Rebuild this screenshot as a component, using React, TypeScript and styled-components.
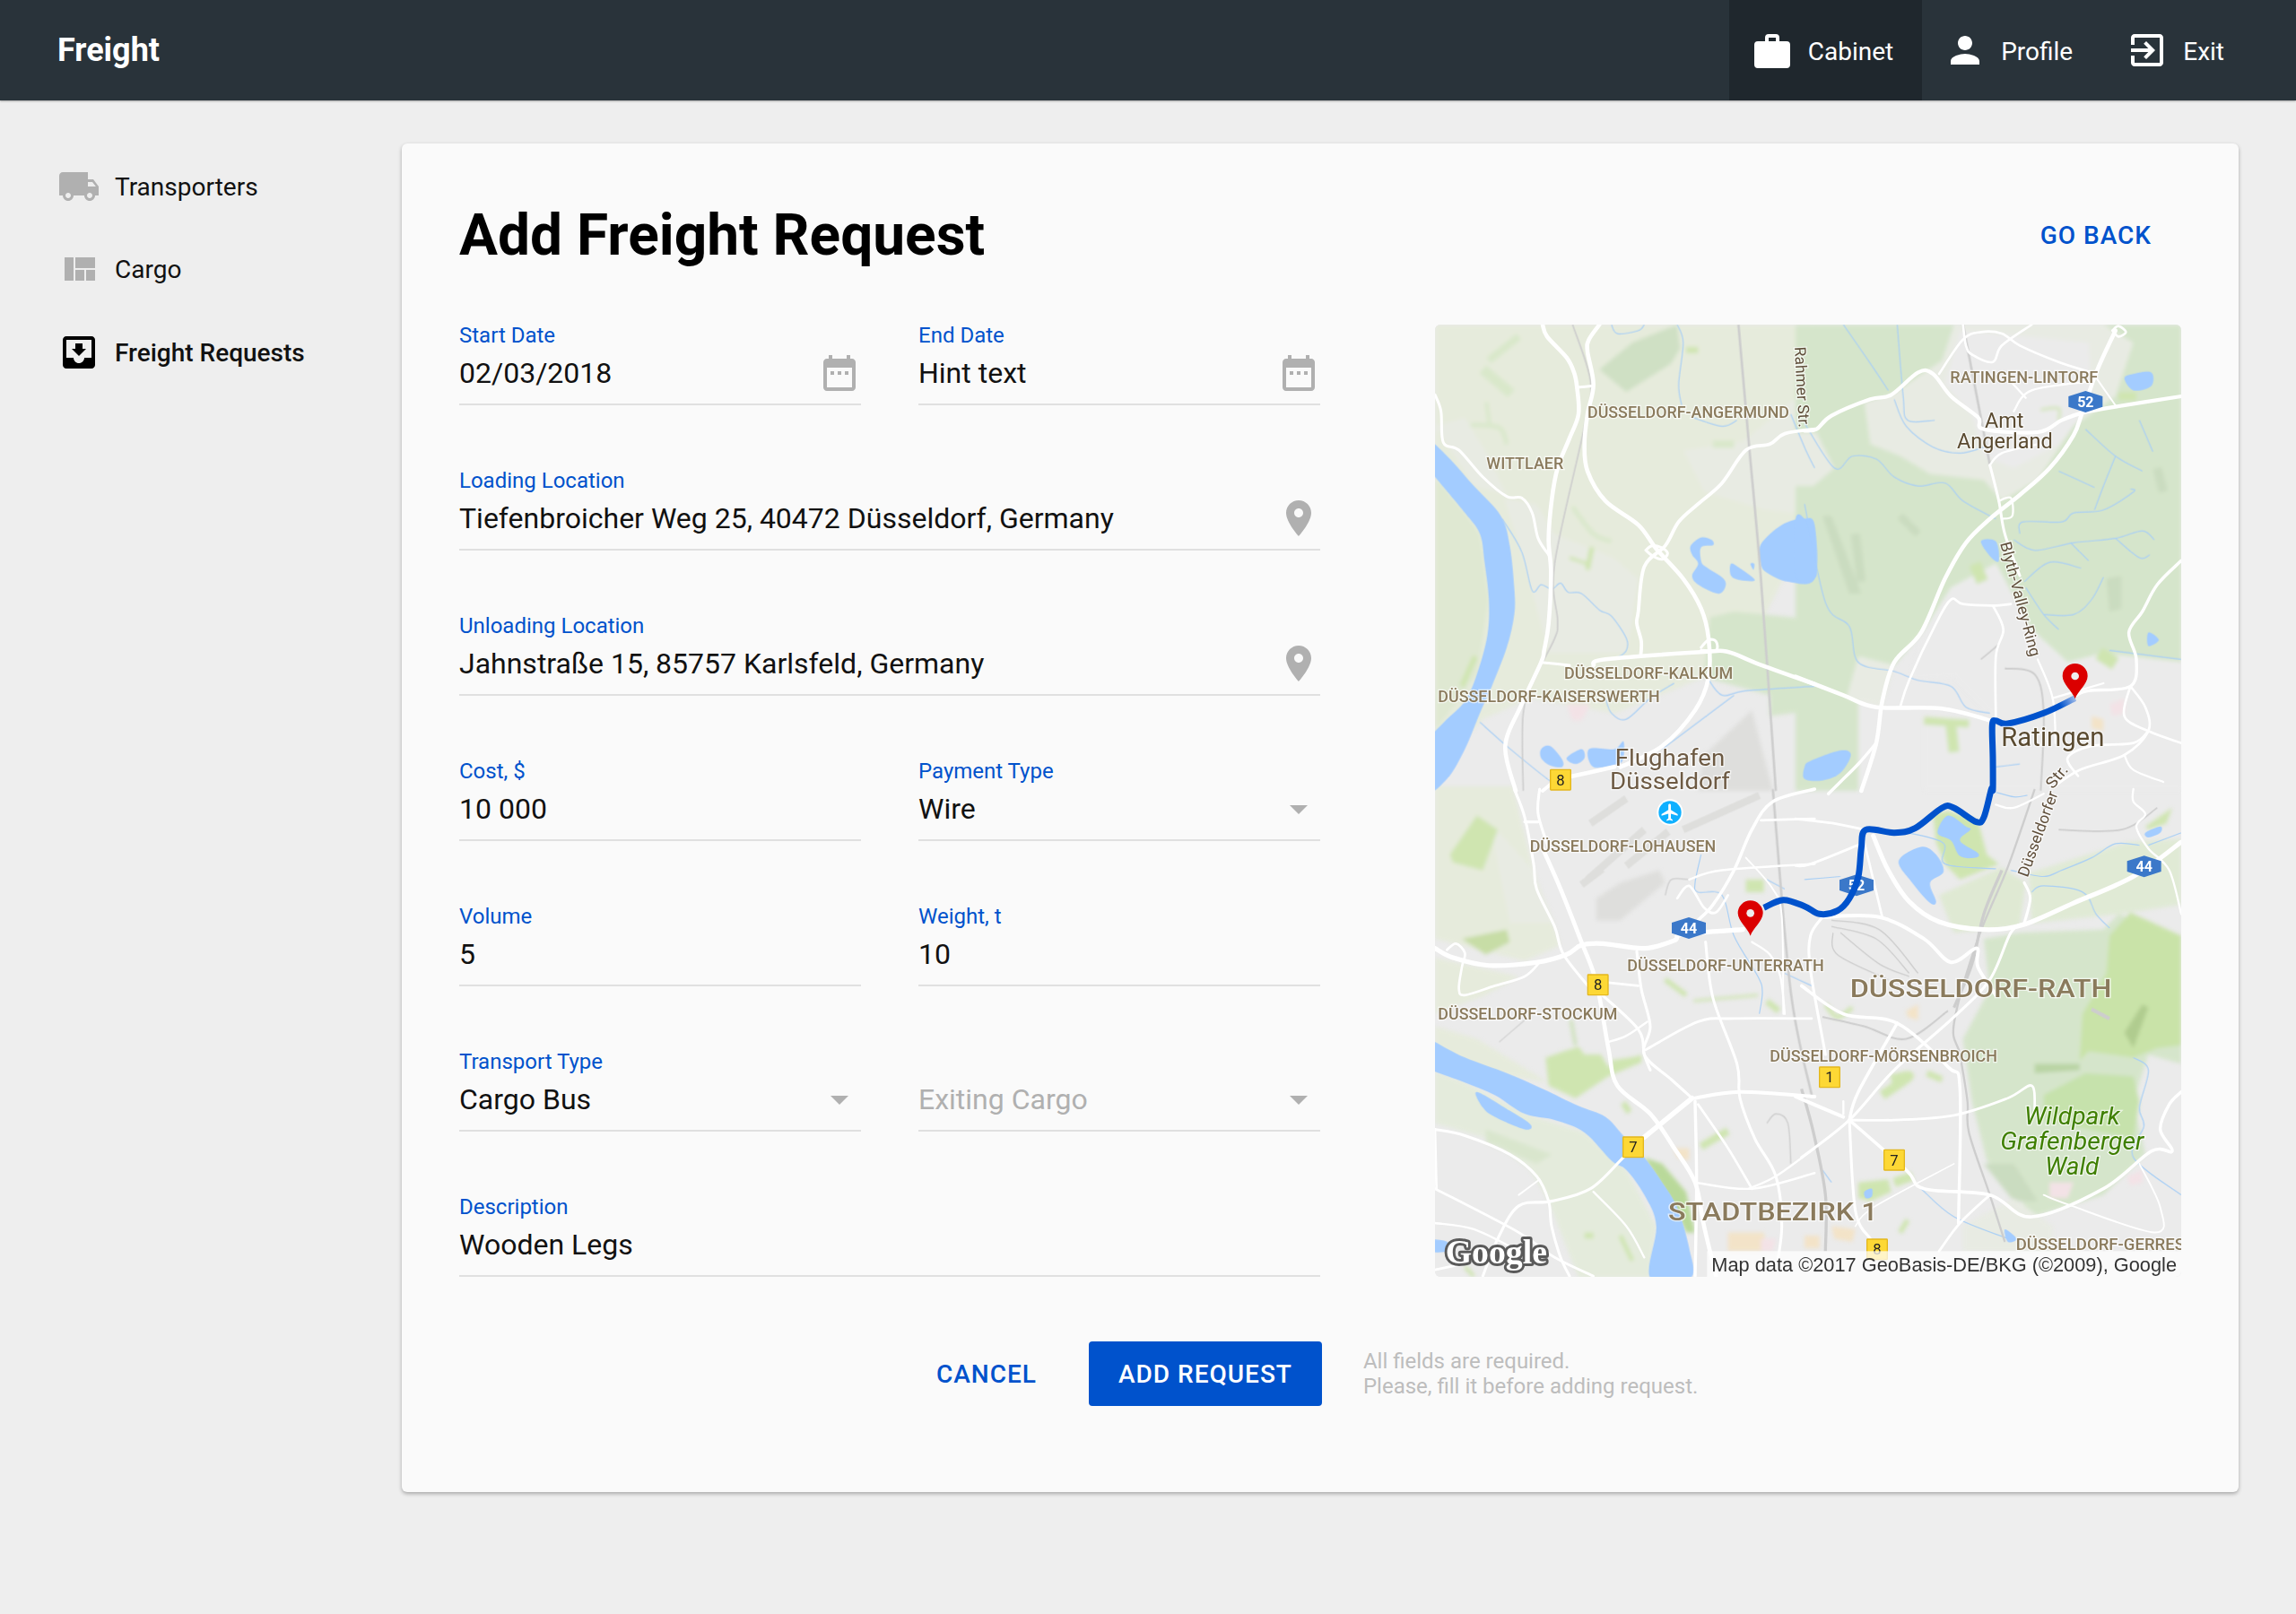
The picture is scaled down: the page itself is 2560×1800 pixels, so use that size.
import React from 'react';
import styled, { createGlobalStyle } from 'styled-components';

const BLUE = '#0052cc';
const GRAY_ICON = '#b0b0b0';

const GlobalStyle = createGlobalStyle`
  html, body {
    margin: 0;
    background: #eeeeee;
    font-family: Roboto, 'Liberation Sans', sans-serif;
  }
`;

const Page = styled.div`
  width: 2560px;
  min-height: 1800px;
  background: #eeeeee;
`;

const Header = styled.header`
  display: flex;
  align-items: stretch;
  justify-content: space-between;
  height: 112px;
  padding: 0 48px 0 64px;
  background: #29333a;
  color: #fff;
  box-shadow: 0 1px 2px rgba(0, 0, 0, 0.3);
`;

const Logo = styled.div`
  align-self: center;
  font-size: 36px;
  font-weight: 700;
`;

const TopNav = styled.nav`
  display: flex;
`;

const TopTab = styled.a<{ $active?: boolean }>`
  display: flex;
  align-items: center;
  gap: 16px;
  padding: 0 32px 0 24px;
  font-size: 28px;
  background: ${({ $active }) => ($active ? '#1f272d' : 'transparent')};
  svg {
    fill: #fff;
  }
  &:last-child {
    margin-left: 3px;
  }
`;

const TabLabel = styled.span`
  margin-top: 3px;
`;

const Shell = styled.div`
  display: flex;
  align-items: flex-start;
`;

const Sidebar = styled.aside`
  display: flex;
  flex-direction: column;
  gap: 44.5px;
  width: 448px;
  box-sizing: border-box;
  padding: 72px 0 0 64px;
  flex: none;
`;

const SideItem = styled.a<{ $active?: boolean }>`
  display: flex;
  align-items: center;
  gap: 16px;
  height: 48px;
  font-size: 28px;
  font-weight: ${({ $active }) => ($active ? 500 : 400)};
  color: #111;
  svg {
    fill: ${({ $active }) => ($active ? '#000' : GRAY_ICON)};
  }
`;

const Card = styled.main`
  width: 2048px;
  box-sizing: border-box;
  margin-top: 48px;
  padding: 0 64px 96px;
  background: #fafafa;
  border-radius: 6px;
  box-shadow: 0 2px 4px rgba(0, 0, 0, 0.3);
`;

const CardHead = styled.div`
  display: flex;
  align-items: center;
  justify-content: space-between;
  height: 200px;
  padding: 2px 33px 0 0;
`;

const Title = styled.h1`
  margin: 0;
  font-size: 64px;
  font-weight: 700;
  color: #000;
`;

const TextButton = styled.a`
  font-size: 28px;
  font-weight: 500;
  letter-spacing: 1px;
  color: ${BLUE};
  text-transform: uppercase;
`;

const Body = styled.div`
  display: flex;
  justify-content: space-between;
`;

const FormGrid = styled.div`
  display: grid;
  grid-template-columns: 448px 448px;
  column-gap: 64px;
  row-gap: 72px;
`;

const FieldBox = styled.div<{ $wide?: boolean }>`
  display: flex;
  flex-direction: column;
  height: 90px;
  box-sizing: border-box;
  border-bottom: 2px solid #e0e0e0;
  grid-column: ${({ $wide }) => ($wide ? 'span 2' : 'auto')};
`;

const FieldLabel = styled.label`
  font-size: 24px;
  line-height: 24px;
  color: ${BLUE};
`;

const FieldRow = styled.div`
  display: flex;
  align-items: center;
  justify-content: space-between;
  flex: 1;
  padding-bottom: 4px;
  svg {
    fill: ${GRAY_ICON};
    flex: none;
  }
`;

const FieldValue = styled.span<{ $muted?: boolean }>`
  font-size: 32px;
  color: ${({ $muted }) => ($muted ? GRAY_ICON : '#111')};
`;

const MapFrame = styled.div`
  width: 832px;
  height: 1062px;
  border-radius: 6px;
  overflow: hidden;
  background: #ebebeb;
  svg {
    display: block;
  }
`;

const Footer = styled.div`
  display: flex;
  align-items: center;
  margin-top: 72px;
  padding-left: 532px;
`;

const CancelButton = styled(TextButton)`
  margin-right: 58px;
`;

const PrimaryButton = styled.button`
  width: 260px;
  height: 72px;
  border: 0;
  border-radius: 4px;
  background: ${BLUE};
  color: #fff;
  font: 500 28px Roboto, sans-serif;
  letter-spacing: 1px;
  text-transform: uppercase;
`;

const Note = styled.p`
  margin: 0 0 0 46px;
  font-size: 24px;
  line-height: 28px;
  color: #bdbdbd;
`;

const MapText = styled.text<{ $tone?: string }>`
  font-family: Roboto, sans-serif;
  fill: ${({ $tone }) => $tone || '#8a7a5c'};
  stroke: rgba(255, 255, 255, 0.65);
  stroke-width: 8px;
  paint-order: stroke;
`;

const Icon = ({ d, size = 48 }: { d: string; size?: number }) => (
  <svg width={size} height={size} viewBox="0 0 24 24">
    <path d={d} fillRule="evenodd" />
  </svg>
);

const ICONS = {
  work: 'M4 7h4V5a2 2 0 0 1 2-2h4a2 2 0 0 1 2 2v2h4a2 2 0 0 1 2 2v11a2 2 0 0 1-2 2H4a2 2 0 0 1-2-2V9a2 2 0 0 1 2-2zM10 5v2h4V5z',
  person: 'M12 12c2.21 0 4-1.79 4-4s-1.79-4-4-4-4 1.79-4 4 1.79 4 4 4zm0 2c-2.67 0-8 1.34-8 4v2h16v-2c0-2.66-5.33-4-8-4z',
  exit: 'M10.09 15.59L11.5 17l5-5-5-5-1.41 1.41L12.67 11H3v2h9.67l-2.58 2.59zM19 3H5c-1.11 0-2 .9-2 2v4h2V5h14v14H5v-4H3v4c0 1.1.89 2 2 2h14c1.1 0 2-.9 2-2V5c0-1.1-.9-2-2-2z',
  truck: 'M20 8h-3V4H3c-1.1 0-2 .9-2 2v11h2c0 1.66 1.34 3 3 3s3-1.34 3-3h6c0 1.66 1.34 3 3 3s3-1.34 3-3h2v-5l-3-4zM6 18.5c-.83 0-1.5-.67-1.5-1.5s.67-1.5 1.5-1.5 1.5.67 1.5 1.5-.67 1.5-1.5 1.5zm13.5-9l1.96 2.5H17V9.5h2.5zm-1.5 9c-.83 0-1.5-.67-1.5-1.5s.67-1.5 1.5-1.5 1.5.67 1.5 1.5-.67 1.5-1.5 1.5z',
  quilt: 'M10 18h5v-6h-5v6zm-6 0h5V5H4v13zm12 0h5v-6h-5v6zM10 5v6h11V5H10z',
  inbox: 'M19 3H4.99c-1.11 0-1.98.89-1.98 2L3 19c0 1.1.88 2 1.99 2H19c1.1 0 2-.9 2-2V5c0-1.11-.9-2-2-2zm0 12h-4c0 1.66-1.35 3-3 3s-3-1.34-3-3H4.99V5H19v10zm-3-5h-2V7h-4v3H8l4 4 4-4z',
  calendar: 'M9 11H7v2h2v-2zm4 0h-2v2h2v-2zm4 0h-2v2h2v-2zm2-7h-1V2h-2v2H8V2H6v2H5c-1.11 0-1.99.9-1.99 2L3 20c0 1.1.89 2 2 2h14c1.1 0 2-.9 2-2V6c0-1.1-.9-2-2-2zm0 16H5V9h14v11z',
  place: 'M12 2C8.13 2 5 5.13 5 9c0 5.25 7 13 7 13s7-7.75 7-13c0-3.87-3.13-7-7-7zm0 9.5c-1.38 0-2.5-1.12-2.5-2.5s1.12-2.5 2.5-2.5 2.5 1.12 2.5 2.5-1.12 2.5-2.5 2.5z',
  arrow: 'M7 10l5 5 5-5z',
};

// map drawing, in 3x pixels: each quadrant keeps the coordinates of its own crop,
// the two lower crops came back squeezed vertically so they get stretched by SQUEEZE
const SQUEEZE = 1.0446;
const FOREST = '#d5e5cb';
const DARK = '#cadcc0';
const RURAL = '#e6ebdc';
const SOFT = '#e8ebe3';
const URBAN = '#ebebeb';
const PARK = '#cfe5b0';
const AIRPORT = '#dededc';
const PINK = '#f3e2e6';
const TAN = '#f3e3c8';
const WATER = '#a3ccff';

type Poly = [string, number[]];
type Line = [number, number[]];
type Quad = {
  dx: number;
  dy: number;
  land: Poly[];
  strips: [string, number, number[]][];
  lakes: number[][];
  streams: number[][];
  rails: Line[];
  roads: Line[];
};

const quads: Quad[] = [
  {
    dx: 0,
    dy: 0,
    land: [
      [RURAL, [0, 0, 1270, 0, 1270, 640, 1090, 1000, 900, 1180, 600, 1300, 320, 1250, 160, 1320, 0, 1500]],
      [SOFT, [230, 580, 340, 600, 400, 700, 600, 780, 680, 850, 660, 1000, 640, 1100, 380, 1100, 300, 800]],
      [SOFT, [0, 340, 100, 310, 180, 440, 240, 570, 130, 540]],
      [SOFT, [830, 420, 1030, 390, 1200, 250, 1270, 300, 1270, 640, 1100, 620, 900, 560]],
      [FOREST, [920, 980, 1000, 960, 1200, 980, 1270, 1020, 1270, 1290, 1120, 1310, 1120, 1240, 900, 1180]],
      ['#cfe0c4', [550, 150, 660, 60, 810, 0, 820, 80, 790, 130, 640, 225]],
      ['#dfe8d2', [0, 510, 100, 630, 150, 700, 180, 920, 140, 1170, 0, 1360]],
      [AIRPORT, [900, 1440, 1060, 1290, 1130, 1560, 880, 1560]],
      [PINK, [440, 1270, 520, 1270, 490, 1325, 460, 1325]],
    ],
    strips: [
      ['#d9e8ca', 24, [180, 120, 280, 40]],
      ['#d9e8ca', 34, [160, 150, 255, 230]],
      ['#d9e8ca', 14, [120, 335, 215, 345, 240, 400]],
      ['#d9e8ca', 12, [172, 260, 182, 330]],
      ['#d9e8ca', 14, [460, 610, 530, 700, 590, 725]],
      ['#d9e8ca', 24, [930, 400, 1000, 400]],
      [PARK, 10, [450, 780, 510, 800]],
      [PARK, 16, [525, 745, 510, 820]],
      [PARK, 18, [135, 1110, 90, 1210]],
      [PARK, 20, [840, 85, 880, 85]],
    ],
    lakes: [
      [1230, 650, 1270, 670, 1270, 850, 1180, 860, 1110, 830, 1090, 800, 1090, 735, 1160, 670],
      [855, 740, 890, 712, 925, 720, 930, 738, 890, 745, 890, 790, 905, 810, 965, 850, 970, 880, 945, 900, 880, 870, 860, 840, 880, 800, 860, 770],
      [990, 800, 1020, 815, 1070, 855, 1020, 855, 990, 840],
      [1055, 800, 1068, 800, 1065, 820],
      [355, 1420, 385, 1410, 425, 1455, 425, 1480, 385, 1475, 355, 1450],
      [440, 1450, 490, 1420, 500, 1450, 470, 1470],
      [515, 1420, 600, 1420, 630, 1395, 630, 1450, 610, 1470, 530, 1480],
      [0, 400, 60, 460, 130, 540, 220, 640, 250, 740, 265, 880, 265, 970, 240, 1080, 190, 1210, 150, 1300, 100, 1420, 40, 1520, -30, 1560, -30, 1380, 0, 1360, 40, 1320, 100, 1260, 140, 1170, 175, 1040, 180, 920, 165, 790, 150, 700, 100, 630, 0, 510, -30, 470, -30, 380],
    ],
    streams: [
      [225, 650, 290, 760, 325, 890, 355, 870, 390, 885, 420, 865, 445, 895, 490, 900, 550, 955, 590, 975, 640, 1050, 640, 1090, 610, 1115],
      [910, 1180, 960, 1240, 1040, 1225, 1270, 1210],
      [800, 1200, 720, 1250, 640, 1320, 590, 1300, 570, 1250],
      [150, 1330, 240, 1410, 350, 1500, 390, 1530],
      [1000, 1240, 800, 1390, 760, 1420],
      [590, 0, 610, 30, 680, 20, 700, 0],
      [810, 0, 830, 60, 815, 200, 825, 270],
      [860, 310, 960, 340, 1010, 320],
      [1190, 300, 1240, 420, 1270, 480],
    ],
    rails: [
      [5, [460, 0, 520, 190, 500, 340, 400, 800, 410, 990, 400, 1050, 340, 1170, 295, 1300, 295, 1560]],
      [8, [1015, 0, 1050, 400, 1090, 850, 1140, 1560]],
    ],
    roads: [
      [12, [360, 0, 375, 40, 440, 110, 465, 160, 475, 210, 480, 300, 450, 380, 410, 480, 390, 590, 380, 720, 388, 830, 380, 1000, 365, 1090, 355, 1130, 290, 1270, 235, 1410, 270, 1560]],
      [12, [550, 0, 515, 50, 510, 90, 530, 200, 510, 300, 500, 400, 510, 490, 570, 590, 680, 670, 740, 750, 830, 850, 890, 950, 915, 1050, 915, 1180, 870, 1290, 760, 1410, 620, 1480]],
      [8, [475, 210, 530, 205]],
      [8, [0, 235, 20, 290, 28, 395, 80, 420, 160, 510, 240, 575, 290, 580, 325, 630, 345, 715, 380, 770]],
      [10, [1270, 350, 1170, 365, 1120, 400, 1040, 420, 960, 530, 880, 600, 815, 660, 770, 740, 700, 810, 680, 960, 675, 1000, 690, 1060, 688, 1110]],
      [8, [355, 1130, 450, 1140]],
      [12, [530, 1140, 570, 1120, 900, 1095, 980, 1095, 1080, 1135, 1270, 1203]],
      [12, [440, 1515, 600, 1480]],
      [10, [360, 1560, 420, 1510]],
      [8, [705, 755, 725, 740, 755, 745, 778, 765, 760, 785, 730, 775, 705, 755]],
      [8, [890, 1080, 915, 1055, 940, 1060, 940, 1090, 890, 1090]],
    ],
  },
  {
    dx: 1236,
    dy: 0,
    land: [
      [FOREST, [-30, 0, 1260, 0, 1260, 1130, 1000, 1100, 880, 1130, 760, 1020, 640, 800, 490, 880, 400, 1020, 300, 1140, 180, 1110, 180, 1560, -30, 1560]],
      [SOFT, [500, 0, 1000, 0, 1100, 60, 1040, 240, 900, 340, 780, 520, 660, 590, 600, 520, 420, 500, 320, 440, 220, 400, 200, 260, 300, 230, 400, 160, 460, 120]],
      [URBAN, [520, 20, 950, 60, 960, 260, 850, 400, 700, 480, 600, 440, 560, 300, 470, 200]],
      [SOFT, [-30, 360, 40, 360, 100, 480, 30, 540, -30, 540]],
      [DARK, [60, 640, 90, 640, 190, 900, 150, 900]],
      [DARK, [1010, 850, 1060, 840, 1060, 950, 1020, 960]],
      [URBAN, [490, 880, 640, 800, 760, 1020, 880, 1130, 1000, 1100, 1260, 1130, 1260, 1560, 400, 1560, 400, 1320, 620, 1300, 500, 1180, 350, 1190, 400, 1020]],
      [SOFT, [180, 1110, 300, 1140, 260, 1280, 140, 1250]],
      [PINK, [1020, 1270, 1070, 1250, 1070, 1300, 1030, 1310]],
      [TAN, [960, 1310, 1000, 1320, 1000, 1360, 960, 1350]],
    ],
    strips: [
      [PARK, 26, [400, 1325, 550, 1335]],
      [PARK, 36, [490, 1340, 500, 1430]],
      [PARK, 40, [570, 800, 595, 860]],
      [PARK, 44, [985, 1100, 1040, 1135]],
      [PARK, 28, [1050, 240, 1110, 240]],
      [PARK, 8, [790, 285, 850, 280, 850, 320]],
      [DARK, 30, [170, 700, 190, 860]],
      [DARK, 26, [320, 640, 380, 700]],
      [DARK, 30, [1180, 480, 1200, 560]],
    ],
    lakes: [
      [590, 725, 640, 725, 650, 790, 625, 780],
      [1070, 180, 1100, 165, 1160, 160, 1160, 205, 1100, 220],
      [-30, 650, 0, 650, 15, 700, 40, 840, -30, 840],
      [1150, 1030, 1185, 1055, 1150, 1075],
      [20, 1460, 120, 1425, 155, 1440, 120, 1500, 60, 1525, 0, 1520, 0, 1480],
    ],
    streams: [
      [130, 0, 220, 130, 280, 220],
      [310, 0, 330, 240, 345, 320, 435, 320],
      [300, 250, 340, 340, 430, 410, 520, 430, 600, 410],
      [0, 330, 100, 480, 160, 440, 240, 450, 300, 510, 380, 540, 470, 530, 530, 590, 640, 650],
      [720, 700, 730, 660, 860, 660, 900, 630, 1000, 620, 1100, 560, 1090, 550],
      [700, 720, 770, 755, 900, 730, 1040, 715, 1130, 690, 1170, 720],
      [1040, 715, 1120, 780, 1155, 770],
      [890, 730, 950, 790],
      [735, 860, 820, 795, 925, 815],
      [740, 880, 800, 970, 850, 1020],
      [800, 970, 900, 970, 960, 920, 1000, 845],
      [940, 350, 1040, 440, 1130, 490],
      [1040, 440, 1000, 540, 970, 620],
      [850, 490, 970, 545],
      [1120, 320, 1165, 425],
      [0, 600, 70, 930, 150, 1010, 180, 1130, 300, 1160, 380, 1190, 490, 1210, 540, 1280, 620, 1300],
      [1020, 1090, 1260, 1120],
      [640, 1480, 720, 1470],
    ],
    rails: [
      [8, [530, 0, 580, 260, 620, 470]],
      [5, [590, 1120, 650, 1070]],
      [6, [670, 1150, 770, 1170, 800, 1300, 790, 1560]],
    ],
    roads: [
      [11, [0, 355, 40, 350, 90, 305, 220, 250, 290, 235, 380, 160, 430, 165, 490, 240, 580, 310, 600, 350, 780, 360, 860, 320, 930, 295, 1040, 275, 1260, 240]],
      [12, [1040, 20, 980, 150, 930, 290, 900, 370, 820, 480, 720, 570, 620, 650, 540, 730, 470, 850, 390, 1030, 300, 1130, 260, 1260, 240, 1400, 190, 1560]],
      [7, [450, 165, 530, 50, 590, 25, 660, 30, 720, 70, 850, 125, 960, 160]],
      [7, [530, 0, 540, 70, 560, 100, 630, 125, 660, 70, 760, 0]],
      [6, [700, 290, 760, 220, 960, 190]],
      [6, [680, 180, 740, 245]],
      [5, [970, 170, 1040, 270]],
      [8, [620, 470, 650, 590, 670, 700, 720, 840]],
      [6, [780, 1120, 830, 1250, 840, 1400]],
      [6, [620, 470, 660, 430, 780, 400]],
      [6, [650, 590, 690, 580, 695, 640, 660, 650]],
      [7, [1030, 20, 1050, 5, 1075, 25, 1050, 40, 1030, 20]],
      [7, [320, 1280, 350, 1190, 440, 1000, 490, 920, 530, 935, 630, 940, 690, 935]],
      [7, [630, 940, 665, 1020, 640, 1110, 640, 1320]],
      [12, [-30, 1178, 130, 1240, 240, 1280, 460, 1285, 640, 1330]],
      [9, [910, 1240, 950, 1225, 1090, 1210, 1110, 1120, 1085, 1030, 1130, 960, 1180, 870, 1260, 790]],
      [7, [1090, 1210, 1070, 1310, 1150, 1360, 1260, 1400]],
      [7, [1090, 1210, 1140, 1280, 1150, 1360, 1070, 1440, 920, 1490, 830, 1550]],
      [7, [1150, 1360, 1100, 1400, 960, 1410, 880, 1450, 915, 1510]],
      [6, [1070, 1440, 1100, 1490, 1200, 1530]],
      [9, [240, 1400, 180, 1470, 120, 1530, 80, 1570]],
      [6, [830, 1250, 1000, 1200]],
    ],
  },
  {
    dx: 0,
    dy: 1554,
    land: [
      [RURAL, [0, -10, 260, -10, 330, 260, 420, 500, 300, 550, 0, 480]],
      [SOFT, [180, 100, 330, 260, 400, 430, 250, 430]],
      [RURAL, [0, 540, 280, 600, 170, 660, 0, 720]],
      [RURAL, [0, 760, 140, 800, 380, 940, 0, 880]],
      [AIRPORT, [540, 350, 620, 300, 750, 260, 770, 300, 720, 340, 620, 420, 540, 420]],
      ['#e4ebdc', [0, 905, 100, 940, 300, 1040, 500, 1100, 640, 1220, 740, 1400, 720, 1565, 480, 1565, 380, 1320, 320, 1220, 180, 1120, 0, 1070]],
      ['#d9e6cd', [170, 1090, 390, 1170, 340, 1200, 170, 1130]],
      [PARK, [370, 860, 430, 840, 480, 825, 500, 850, 555, 850, 580, 890, 690, 850, 690, 875, 580, 920, 470, 990, 380, 950]],
      [PARK, [50, 210, 140, 85, 210, 130, 160, 260, 60, 235]],
      ['#c7dda6', [90, 480, 240, 450, 250, 490, 170, 530]],
      ['#b9d99a', [700, 1180, 760, 1200, 840, 1290, 870, 1420, 840, 1420, 790, 1320]],
      [TAN, [800, 1150, 850, 1150, 850, 1190, 810, 1180]],
      [TAN, [980, 1420, 1100, 1420, 1110, 1480, 980, 1480]],
      [PINK, [1090, 1440, 1140, 1440, 1130, 1480, 1090, 1480]],
      [PARK, [1040, 290, 1100, 290, 1100, 330, 1040, 330]],
    ],
    strips: [
      [PARK, 20, [630, 1005, 650, 1035]],
      [PARK, 22, [590, 880, 690, 865]],
      [PARK, 24, [890, 1145, 980, 1095]],
      [PARK, 14, [620, 1430, 660, 1510]],
      [PARK, 12, [100, 1530, 130, 1560]],
      [PARK, 18, [500, 1430, 530, 1430]],
      [PARK, 8, [865, 678, 1080, 660]],
      [PARK, 16, [770, 610, 840, 660]],
      ['#cfe2bd', 12, [455, 740, 470, 820]],
      [PARK, 20, [1110, 680, 1150, 710]],
    ],
    lakes: [
      [-30, 795, 0, 810, 100, 860, 240, 910, 360, 960, 480, 1015, 570, 1050, 630, 1110, 700, 1180, 760, 1260, 810, 1340, 850, 1470, 855, 1565, 720, 1565, 740, 1400, 700, 1300, 640, 1220, 590, 1190, 500, 1100, 400, 1060, 300, 1040, 200, 980, 100, 940, 0, 905, -30, 890],
      [140, 970, 250, 1030, 320, 1075, 300, 1090, 200, 1050, 160, 1020],
      [-20, 1445, 40, 1450, 40, 1480, -20, 1480],
    ],
    streams: [
      [890, 210, 870, 300, 880, 330, 960, 340, 1000, 470, 1080, 600, 1095, 650, 1085, 720],
      [1170, 590, 1260, 630],
      [1110, 290, 1170, 320],
    ],
    rails: [
      [8, [1130, 0, 1190, 650, 1260, 980]],
      [3, [215, 810, 300, 740]],
      [4, [1110, 1070, 1140, 1040, 1180, 1070, 1190, 1200]],
      [4, [770, 340, 790, 290, 850, 290]],
    ],
    roads: [
      [12, [360, 190, 420, 320, 490, 490, 540, 620, 580, 830, 610, 950, 720, 1040, 800, 1150, 870, 1260, 900, 1400, 940, 1560]],
      [8, [265, 0, 300, 90, 330, 240, 340, 320, 400, 440, 430, 530, 520, 640]],
      [8, [350, 0, 345, 80, 380, 190]],
      [8, [300, 105, 345, 105]],
      [13, [0, 510, 60, 540, 180, 565, 340, 555, 440, 530, 490, 500, 560, 495, 700, 510, 800, 485, 830, 465, 1030, 450]],
      [7, [40, 515, 70, 495, 100, 525, 90, 570, 80, 640, 100, 660, 200, 630, 300, 600, 350, 555]],
      [8, [675, 520, 690, 640, 720, 760, 700, 850, 790, 930, 860, 990]],
      [7, [580, 620, 680, 630]],
      [8, [560, 660, 680, 770, 700, 850, 720, 900]],
      [6, [580, 810, 640, 790, 710, 745]],
      [7, [705, 835, 880, 745, 1000, 735, 1260, 735]],
      [8, [905, 490, 930, 670, 1010, 880, 1020, 990, 1070, 1120, 1140, 1240, 1160, 1400, 1140, 1545]],
      [14, [860, 990, 700, 1115]],
      [8, [700, 1115, 630, 1180, 520, 1280, 390, 1320, 280, 1335, 210, 1440, 160, 1560]],
      [10, [870, 990, 1020, 970, 1270, 985]],
      [9, [870, 1000, 875, 1260, 870, 1560]],
      [7, [880, 1010, 980, 1150, 1060, 1280]],
      [6, [1050, 1280, 1140, 1240, 1270, 1150]],
      [6, [870, 1260, 1060, 1280, 1270, 1230]],
      [8, [0, 1090, 100, 1110, 250, 1170, 340, 1240, 380, 1320, 390, 1400, 420, 1500, 450, 1560]],
      [5, [280, 1300, 350, 1250]],
      [7, [0, 1280, 280, 1420, 400, 1500, 530, 1560]],
      [6, [0, 1390, 130, 1410, 280, 1480]],
      [6, [530, 1290, 640, 1400, 700, 1500]],
      [7, [0, 1540, 100, 1520]],
      [9, [1270, 0, 1130, 40, 1060, 130, 1000, 260, 930, 370, 880, 420]],
      [7, [1090, 100, 1270, 95]],
      [6, [850, 290, 960, 260, 1270, 240]],
      [7, [810, 350, 850, 310, 900, 380, 940, 395, 980, 340]],
      [5, [1040, 220, 1130, 320, 1160, 410, 1165, 720]],
      [6, [1060, 490, 1120, 530, 1155, 600, 1170, 720]],
      [7, [0, 1090, 5, 1280]],
    ],
  },
  {
    dx: 1236,
    dy: 1554,
    land: [
      [PARK, [430, 80, 480, 70, 580, 100, 610, 210, 650, 240, 520, 290, 470, 240, 440, 170]],
      ['#dfe9d3', [450, 340, 660, 250, 740, 300, 720, 440, 500, 460]],
      ['#e0ead5', [750, 270, 1080, 170, 1260, 160, 1260, 370, 1050, 400, 760, 430]],
      [PARK, [1140, 120, 1230, 60, 1210, 110, 1150, 130]],
      [FOREST, [600, 480, 720, 460, 1000, 450, 1050, 400, 1260, 470, 1260, 880, 1150, 850, 1100, 1000, 1140, 1170, 1000, 1300, 760, 1370, 700, 1280, 610, 1190, 560, 1000, 530, 800, 620, 640]],
      ['#c9e3a8', [1020, 470, 1090, 395, 1260, 470, 1260, 820, 1180, 830, 1100, 860, 950, 840, 920, 870, 930, 720, 1010, 590]],
      ['#c6e2ac', [800, 980, 940, 910, 1100, 920, 1120, 1000, 1100, 1120, 800, 1060]],
      [DARK, [600, 1200, 700, 1200, 780, 1320, 700, 1320]],
      ['#b0cc8f', [1070, 780, 1130, 690, 1150, 700, 1100, 830]],
      ['#b9d4a4', [770, 880, 920, 880, 920, 900, 770, 910]],
      [PINK, [820, 1260, 900, 1260, 880, 1310, 820, 1310]],
      [PINK, [1080, 1240, 1130, 1220, 1130, 1260, 1090, 1270]],
      [TAN, [340, 710, 380, 690, 380, 740, 345, 730]],
      [PARK, [180, 1260, 280, 1250, 290, 1290, 220, 1320, 180, 1310]],
      [TAN, [0, 1430, 50, 1430, 50, 1470, 0, 1470]],
      [TAN, [90, 1400, 170, 1410, 160, 1450, 100, 1440]],
      [SOFT, [530, 1400, 700, 1310, 830, 1400, 830, 1480, 530, 1480]],
    ],
    strips: [
      [PARK, 30, [290, 930, 350, 920, 260, 980]],
      [PARK, 16, [320, 1420, 345, 1380]],
      [PARK, 14, [70, 690, 110, 730, 160, 700]],
      [PARK, 20, [410, 910, 460, 930]],
      [PARK, 30, [300, 1260, 360, 1240]],
    ],
    lakes: [
      [315, 230, 390, 185, 440, 210, 465, 265, 420, 300, 440, 360, 420, 365, 360, 300],
      [445, 140, 480, 85, 540, 120, 555, 130, 520, 165, 580, 205, 570, 220, 520, 215, 490, 165],
      [1140, 140, 1190, 120, 1190, 140, 1150, 155],
      [670, 1410, 710, 1440, 680, 1450],
      [200, 1290, 225, 1280, 225, 1305, 205, 1310],
    ],
    streams: [
      [290, 130, 460, 170, 470, 240, 640, 255],
      [690, 260, 800, 280, 860, 260, 960, 220, 1040, 175, 1120, 180],
      [760, 330, 800, 310, 930, 330, 975, 400, 1020, 445],
      [1150, 180, 1260, 140],
      [390, 1280, 500, 1370, 680, 1440],
      [1100, 860, 1150, 900, 1120, 1020, 1135, 1080, 1100, 1180, 1260, 1300],
      [640, 10, 700, 25, 745, 20],
      [0, 290, 120, 280],
      [60, 1220, 90, 1260],
    ],
    rails: [
      [7, [770, 0, 680, 250, 580, 480, 500, 750, 520, 850, 545, 1000, 550, 1100, 620, 1300, 670, 1450]],
      [10, [660, 260, 600, 400, 560, 560, 500, 700]],
      [10, [-10, 960, 30, 1100, 70, 1300, 70, 1480]],
      [4, [90, 420, 250, 450, 380, 590]],
      [4, [90, 440, 240, 480, 350, 590]],
      [4, [95, 460, 110, 530, 280, 610]],
      [4, [120, 460, 250, 560, 350, 600]],
      [6, [60, 730, 200, 760, 340, 800, 480, 710]],
      [5, [850, 130, 1060, 130, 1180, 60]],
      [12, [960, 705, 1020, 735]],
    ],
    roads: [
      [13, [230, 150, 280, 260, 350, 360, 450, 425, 600, 450, 730, 435, 900, 365, 1100, 280, 1260, 170]],
      [7, [-30, 95, 100, 110, 200, 130]],
      [7, [-30, 245, 20, 240, 190, 175]],
      [7, [190, 130, 260, 410]],
      [10, [60, 410, 250, 410, 400, 480, 490, 555, 575, 510, 580, 570, 640, 660]],
      [8, [60, 410, 20, 470, 20, 580, 70, 850]],
      [8, [735, 430, 690, 460, 620, 610, 500, 730, 300, 900, 150, 1060, -10, 1180]],
      [8, [735, 430, 755, 350, 735, 300]],
      [7, [150, 1060, 300, 1060, 500, 1045, 680, 990, 760, 950, 770, 1030]],
      [9, [-10, 630, 130, 720, 310, 750, 480, 890, 520, 960, 515, 1390]],
      [9, [310, 750, 180, 970, 150, 1060]],
      [10, [-30, 985, 130, 1050]],
      [9, [150, 1060, 340, 1220, 400, 1280, 620, 1300, 760, 1370, 1000, 1280, 1160, 1160, 1230, 1160, 1190, 1090, 1220, 1010, 1260, 970]],
      [8, [150, 1060, 170, 1350, 220, 1440]],
      [7, [620, 1300, 520, 1390, 450, 1480]],
      [4, [500, 1200, 230, 1340, 170, 1400]],
      [5, [800, 1300, 880, 1330, 1170, 1420, 1190, 1340, 1120, 1200]],
      [6, [1100, 0, 1100, 40, 1140, 80, 1110, 120, 1150, 190, 1220, 260, 1260, 400]],
      [6, [640, 50, 700, 60, 800, 15]],
      [6, [130, 1000, 130, 1040]],
    ],
  },
];

const ROUTE = [
  2141, 1250, 2036, 1300, 1916, 1335, 1876, 1325, 1864, 1340, 1866, 1450, 1866, 1554, 1861, 1554, 1836, 1648, 1811, 1664,
  1736, 1617, 1696, 1617, 1606, 1685, 1536, 1700, 1441, 1690, 1426, 1752, 1416, 1846, 1386, 1920, 1346, 1961, 1286, 1972,
  1236, 1946, 1165, 1925, 1100, 1951,
];

const AREA_LABELS: [string, number, number, number][] = [
  ['DÜSSELDORF-ANGERMUND', 510, 312, 675],
  ['WITTLAER', 172, 483, 258],
  ['DÜSSELDORF-KALKUM', 432, 1185, 565],
  ['DÜSSELDORF-KAISERSWERTH', 10, 1264, 742],
  ['RATINGEN-LINTORF', 1723, 195, 495],
  ['DÜSSELDORF-LOHAUSEN', 317, 1765, 623],
  ['DÜSSELDORF-STOCKUM', 10, 2325, 600],
  ['DÜSSELDORF-UNTERRATH', 643, 2164, 658],
  ['DÜSSELDORF-MÖRSENBROICH', 1120, 2465, 761],
  ['DÜSSELDORF-GERRESHEIM', 1943, 3095, 700],
];

const PLACE_LABELS: [string, number, number, number, number, string, number][] = [
  ['Flughafen', 602, 1475, 368, 80, '#6d5a43', 400],
  ['Düsseldorf', 585, 1555, 402, 80, '#6d5a43', 400],
  ['Amt', 1839, 345, 130, 74, '#5a4a30', 400],
  ['Angerland', 1746, 415, 320, 74, '#5a4a30', 400],
  ['Ratingen', 1894, 1410, 345, 88, '#5a4a30', 400],
  ['DÜSSELDORF-RATH', 1388, 2249, 875, 84, '#8a7a5c', 500],
  ['STADTBEZIRK 1', 780, 2998, 701, 84, '#8a7a5c', 500],
];

const ROAD_LABELS: [string, number, number, number, number][] = [
  ['Rahmer Str.', 1203, 75, 270, 87],
  ['Blyth-Valley-Ring', 1890, 732, 395, 75],
  ['Düsseldorfer', 1982, 1851, 300, -70],
  ['Str.', 2066, 1556, 85, -50],
];

const FOREST_LABELS: [string, number, number, number][] = [
  ['Wildpark', 1971, 2677, 320],
  ['Grafenberger', 1891, 2761, 480],
  ['Wald', 2041, 2844, 180],
];

const SHIELDS: [string, number, number][] = [
  ['52', 2176, 258],
  ['44', 849, 2019],
  ['52', 1410, 1876],
  ['44', 2372, 1813],
];

const BADGES: [string, number, number][] = [
  ['8', 420, 1523],
  ['8', 545, 2209],
  ['7', 663, 2752],
  ['1', 1320, 2518],
  ['7', 1536, 2795],
  ['8', 1479, 3094],
];

function smooth(p: number[], closed = false) {
  const pts: [number, number][] = [];
  for (let i = 0; i < p.length; i += 2) pts.push([p[i], p[i + 1]]);
  const n = pts.length;
  const at = (i: number) => (closed ? pts[(i + n) % n] : pts[Math.max(0, Math.min(n - 1, i))]);
  let d = `M${pts[0][0]} ${pts[0][1]}`;
  const last = closed ? n : n - 1;
  for (let i = 0; i < last; i++) {
    const [a, b, c, e] = [at(i - 1), at(i), at(i + 1), at(i + 2)];
    const c1x = b[0] + (c[0] - a[0]) / 6;
    const c1y = b[1] + (c[1] - a[1]) / 6;
    const c2x = c[0] - (e[0] - b[0]) / 6;
    const c2y = c[1] - (e[1] - b[1]) / 6;
    d += `C${c1x} ${c1y} ${c2x} ${c2y} ${c[0]} ${c[1]}`;
  }
  return closed ? d + 'Z' : d;
}

const straight = (p: number[]) => {
  let d = '';
  for (let i = 0; i < p.length; i += 2) d += `${i ? 'L' : 'M'}${p[i]} ${p[i + 1]}`;
  return d + 'Z';
};

const Pin = ({ x, y }: { x: number; y: number }) => (
  <g transform={`translate(${x} ${y})`}>
    <path d="M0 0C-8 -24 -42 -50 -42 -76A42 42 0 1 1 42 -76C42 -50 8 -24 0 0Z" fill="#db0000" />
    <circle cy={-76} r={13} fill="#eeeeee" />
  </g>
);

function RouteMap() {
  const layer = (render: (q: Quad) => React.ReactNode) =>
    quads.map((q, i) => (
      <g key={i} transform={`translate(${q.dx} ${q.dy}) scale(1 ${q.dy ? SQUEEZE : 1})`}>
        {render(q)}
      </g>
    ));

  return (
    <svg width={832} height={1062} viewBox="0 0 2496 3186">
      <defs>
        <filter id="soft" x="-5%" y="-5%" width="110%" height="110%">
          <feGaussianBlur stdDeviation="7" />
        </filter>
        <linearGradient id="routeFade" gradientUnits="userSpaceOnUse" x1="2141" y1="1250" x2="2090" y2="1275">
          <stop offset="0" stopColor="#9db9e8" />
          <stop offset="1" stopColor={BLUE} />
        </linearGradient>
      </defs>
      <rect width={2496} height={3186} fill={URBAN} />
      <g filter="url(#soft)">
        {layer((q) => (
          <>
            {q.land.map(([c, p], i) => (
              <path key={i} d={straight(p)} fill={c} />
            ))}
            {q.strips.map(([c, w, p], i) => (
              <path key={i} d={smooth(p)} fill="none" stroke={c} strokeWidth={w} />
            ))}
          </>
        ))}
      </g>
      <g transform={`translate(0 1554) scale(1 ${SQUEEZE})`} stroke={AIRPORT} fill="none" strokeWidth={24}>
        <path d="M510 290L700 130M520 110L640 30M830 130L1085 20M490 306L560 256M640 246L780 136" />
      </g>
      {layer((q) =>
        q.streams.map((p, i) => <path key={i} d={smooth(p)} fill="none" stroke="#a9cff5" strokeWidth={3.5} />),
      )}
      {layer((q) => q.lakes.map((p, i) => <path key={i} d={smooth(p, true)} fill={WATER} />))}
      {layer((q) =>
        q.rails.map(([w, p], i) => <path key={i} d={smooth(p)} fill="none" stroke="#cdcdcd" strokeWidth={w} />),
      )}
      <g fill="none" stroke="#fff" strokeLinecap="round" strokeLinejoin="round">
        {layer((q) => q.roads.map(([w, p], i) => <path key={i} d={smooth(p)} strokeWidth={w * 1.15} />))}
      </g>

      {SHIELDS.map(([n, x, y]) => (
        <g key={`${n}${x}`} transform={`translate(${x} ${y})`}>
          <path d="M-57 -18L0 -36L57 -18V17L0 36L-57 17Z" fill="#3b78c9" />
          <text y={17} textAnchor="middle" fontFamily="Roboto" fontWeight={700} fontSize={48} fill="#fff">
            {n}
          </text>
        </g>
      ))}

      <path d={smooth(ROUTE)} fill="none" stroke="url(#routeFade)" strokeWidth={21} strokeLinejoin="round" />

      {BADGES.map(([n, x, y]) => (
        <g key={`${n}${x}`} transform={`translate(${x} ${y})`}>
          <rect x={-34} y={-34} width={68} height={68} rx={2} fill="#fdd835" stroke="#e3b71d" strokeWidth={4} />
          <text y={18} textAnchor="middle" fontFamily="Roboto" fontSize={50} fill="#222">
            {n}
          </text>
        </g>
      ))}

      {AREA_LABELS.map(([t, x, y, w]) => (
        <MapText key={t} x={x} y={y} fontSize={54} fontWeight={500} textLength={w} lengthAdjust="spacingAndGlyphs">
          {t}
        </MapText>
      ))}
      {PLACE_LABELS.map(([t, x, y, w, s, c, weight]) => (
        <MapText key={t} $tone={c} x={x} y={y} fontSize={s} fontWeight={weight} textLength={w} lengthAdjust="spacingAndGlyphs">
          {t}
        </MapText>
      ))}
      {ROAD_LABELS.map(([t, x, y, w, a]) => (
        <MapText
          key={t}
          $tone="#5f4e3a"
          x={0}
          y={0}
          fontSize={52}
          textLength={w}
          lengthAdjust="spacingAndGlyphs"
          transform={`translate(${x} ${y}) rotate(${a})`}
        >
          {t}
        </MapText>
      ))}
      {FOREST_LABELS.map(([t, x, y, w]) => (
        <MapText key={t} $tone="#3f7f00" x={x} y={y} fontSize={82} fontStyle="italic" textLength={w} lengthAdjust="spacingAndGlyphs">
          {t}
        </MapText>
      ))}

      <g transform="translate(786 1632)">
        <circle r={44} fill="#fff" />
        <circle r={38} fill="#0fb0ff" />
        <path
          transform="translate(-34 -34) scale(2.85)"
          d="M21 16v-2l-8-5V3.5c0-.83-.67-1.5-1.5-1.5S10 2.67 10 3.5V9l-8 5v2l8-2.5V19l-2 1.5V22l3.5-1 3.5 1v-1.5L13 19v-5.5l8 2.5z"
          fill="#fff"
        />
      </g>

      <Pin x={2141} y={1252} />
      <Pin x={1055} y={2045} />

      <text
        x={35}
        y={3140}
        fontFamily="'Liberation Serif', serif"
        fontWeight={700}
        fontSize={116}
        textLength={340}
        lengthAdjust="spacingAndGlyphs"
        fill="#fff"
        stroke="#5a5a5a"
        strokeWidth={18}
        strokeLinejoin="round"
        paintOrder="stroke"
      >
        Google
      </text>

      <rect x={910} y={3100} width={1586} height={86} fill="#fff" fillOpacity={0.72} />
      <text
        x={925}
        y={3168}
        fontFamily="'Liberation Sans', sans-serif"
        fontSize={65}
        textLength={1556}
        lengthAdjust="spacingAndGlyphs"
        fill="#333"
      >
        Map data ©2017 GeoBasis-DE/BKG (©2009), Google
      </text>
    </svg>
  );
}

const Field = ({
  label,
  value,
  icon,
  wide,
  muted,
}: {
  label?: string;
  value: string;
  icon?: string;
  wide?: boolean;
  muted?: boolean;
}) => (
  <FieldBox $wide={wide}>
    <FieldLabel>{label || '\u00a0'}</FieldLabel>
    <FieldRow>
      <FieldValue $muted={muted}>{value}</FieldValue>
      {icon && <Icon d={icon} />}
    </FieldRow>
  </FieldBox>
);

export default function App() {
  return (
    <Page>
      <GlobalStyle />
      <Header>
        <Logo>Freight</Logo>
        <TopNav>
          <TopTab $active>
            <Icon d={ICONS.work} />
            <TabLabel>Cabinet</TabLabel>
          </TopTab>
          <TopTab>
            <Icon d={ICONS.person} />
            <TabLabel>Profile</TabLabel>
          </TopTab>
          <TopTab>
            <Icon d={ICONS.exit} />
            <TabLabel>Exit</TabLabel>
          </TopTab>
        </TopNav>
      </Header>
      <Shell>
        <Sidebar>
          <SideItem>
            <Icon d={ICONS.truck} />
            Transporters
          </SideItem>
          <SideItem>
            <Icon d={ICONS.quilt} />
            Cargo
          </SideItem>
          <SideItem $active>
            <Icon d={ICONS.inbox} />
            Freight Requests
          </SideItem>
        </Sidebar>
        <Card>
          <CardHead>
            <Title>Add Freight Request</Title>
            <TextButton>Go back</TextButton>
          </CardHead>
          <Body>
            <FormGrid>
              <Field label="Start Date" value="02/03/2018" icon={ICONS.calendar} />
              <Field label="End Date" value="Hint text" icon={ICONS.calendar} />
              <Field wide label="Loading Location" value="Tiefenbroicher Weg 25, 40472 Düsseldorf, Germany" icon={ICONS.place} />
              <Field wide label="Unloading Location" value="Jahnstraße 15, 85757 Karlsfeld, Germany" icon={ICONS.place} />
              <Field label="Cost, $" value="10 000" />
              <Field label="Payment Type" value="Wire" icon={ICONS.arrow} />
              <Field label="Volume" value="5" />
              <Field label="Weight, t" value="10" />
              <Field label="Transport Type" value="Cargo Bus" icon={ICONS.arrow} />
              <Field muted value="Exiting Cargo" icon={ICONS.arrow} />
              <Field wide label="Description" value="Wooden Legs" />
            </FormGrid>
            <MapFrame>
              <RouteMap />
            </MapFrame>
          </Body>
          <Footer>
            <CancelButton>Cancel</CancelButton>
            <PrimaryButton>Add request</PrimaryButton>
            <Note>
              All fields are required.
              <br />
              Please, fill it before adding request.
            </Note>
          </Footer>
        </Card>
      </Shell>
    </Page>
  );
}
